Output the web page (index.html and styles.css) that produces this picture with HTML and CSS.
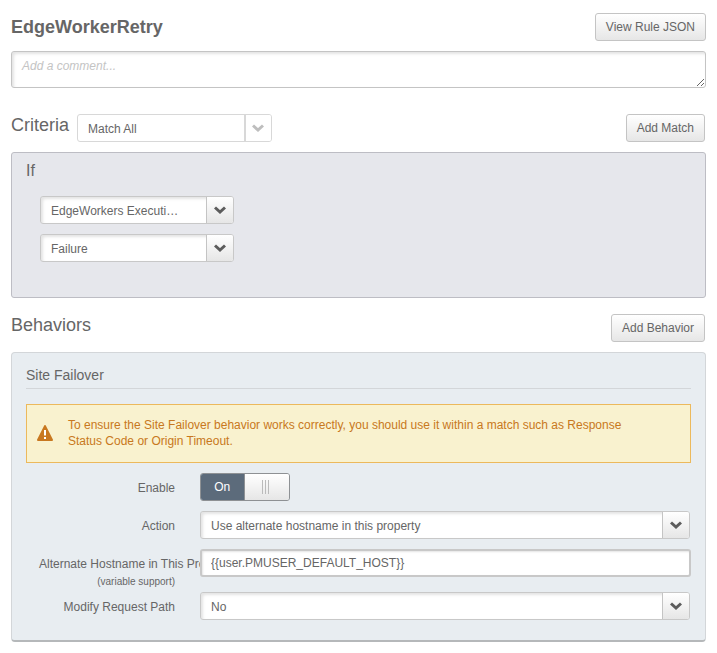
FILE: index.html
```html
<!DOCTYPE html>
<html lang="en">
<head>
<meta charset="utf-8">
<meta name="viewport" content="width=device-width, initial-scale=1">
<title>EdgeWorkerRetry</title>
<link rel="stylesheet" href="styles.css">
</head>
<body>
<main class="rule">
  <header class="bar">
    <h1 class="rule-name">EdgeWorkerRetry</h1>
    <button type="button" class="btn">View Rule JSON</button>
  </header>
  <textarea class="comment" aria-label="Comment" placeholder="Add a comment..."></textarea>

  <section>
    <div class="bar bar-inset">
      <h2 class="heading">Criteria</h2>
      <div class="select select-short select-muted">
        <select aria-label="Match mode"><option>Match All</option></select>
        <svg class="chevron" viewBox="0 0 12 9" aria-hidden="true"><path d="M1 1.5 6 6 11 1.5"/></svg>
      </div>
      <button type="button" class="btn">Add Match</button>
    </div>
    <div class="criteria">
      <h3 class="if">If</h3>
      <div class="conditions">
        <div class="select select-short">
          <select aria-label="Match type"><option>EdgeWorkers Executi…</option></select>
          <svg class="chevron" viewBox="0 0 12 9" aria-hidden="true"><path d="M1 1.5 6 6 11 1.5"/></svg>
        </div>
        <div class="select select-short">
          <select aria-label="Match value"><option>Failure</option></select>
          <svg class="chevron" viewBox="0 0 12 9" aria-hidden="true"><path d="M1 1.5 6 6 11 1.5"/></svg>
        </div>
      </div>
    </div>
  </section>

  <section>
    <div class="bar bar-inset">
      <h2 class="heading">Behaviors</h2>
      <button type="button" class="btn">Add Behavior</button>
    </div>
    <div class="behavior">
      <h3 class="behavior-name">Site Failover</h3>
      <div class="warning" role="alert">
        <svg class="warning-icon" viewBox="0 0 16 16" aria-hidden="true">
          <path class="triangle" d="M7.2.5a1 1 0 0 1 1.6 0L15.900 14.500a1 1 0 0 1-.9 1.500H1a1 1 0 0 1-.9-1.500z"/>
          <path class="mark" d="M7 5h2v5.500H7zM7 12h2v2H7z"/>
        </svg>
        <p>To ensure the Site Failover behavior works correctly, you should use it within a match such as Response Status Code or Origin Timeout.</p>
      </div>
      <div class="fields">
        <div class="field">
          <label class="label" for="enable">Enable</label>
          <div class="toggle">
            <input type="checkbox" id="enable" checked>
            <span class="toggle-on">On</span>
            <span class="toggle-knob"><i></i><i></i><i></i></span>
          </div>
        </div>
        <div class="field">
          <label class="label" for="action">Action</label>
          <div class="select">
            <select id="action"><option>Use alternate hostname in this property</option></select>
            <svg class="chevron" viewBox="0 0 12 9" aria-hidden="true"><path d="M1 1.5 6 6 11 1.5"/></svg>
          </div>
        </div>
        <div class="field">
          <label class="label" for="host">Alternate Hostname in This Property<small>(variable support)</small></label>
          <input class="text" type="text" id="host" value="{{user.PMUSER_DEFAULT_HOST}}">
        </div>
        <div class="field">
          <label class="label" for="path">Modify Request Path</label>
          <div class="select">
            <select id="path"><option>No</option></select>
            <svg class="chevron" viewBox="0 0 12 9" aria-hidden="true"><path d="M1 1.5 6 6 11 1.5"/></svg>
          </div>
        </div>
      </div>
    </div>
  </section>
</main>
</body>
</html>
```
FILE: styles.css
```css
* {
  box-sizing: border-box;
}

body {
  margin: 0;
  background: #fff;
  color: #666;
  font: 12px/16px "Liberation Sans", Arial, sans-serif;
}

h1, h2, h3, p {
  margin: 0;
  font-weight: normal;
}

input, select, textarea, button {
  margin: 0;
  font: inherit;
  color: inherit;
}

.rule {
  padding: 13px 11px 12px;
}

.bar {
  display: flex;
  align-items: center;
  margin-bottom: 10px;
}

.bar-inset {
  margin-top: 16px;
  padding-right: 1px;
}

.comment + section .bar {
  margin-top: 26px;
}

.bar .btn {
  margin-left: auto;
}

.rule-name {
  font-size: 18px;
  line-height: 28px;
  font-weight: bold;
}

.heading {
  font-size: 18px;
  line-height: 22px;
  padding-bottom: 6px;
  margin-right: 8px;
}

.btn {
  height: 28px;
  padding: 0 10px;
  border: 1px solid #c4c4c4;
  border-radius: 3px;
  background: linear-gradient(#fff, #e6e6e6);
}

.comment {
  display: block;
  width: 100%;
  height: 37px;
  padding: 6px 10px;
  border: 1px solid #c4c4c4;
  border-radius: 3px;
  box-shadow: inset 2px 2px 3px #e4e4e4;
  resize: vertical;
  overflow: hidden;
}

.comment::placeholder {
  color: #c4c4c4;
  font-style: italic;
}

.select {
  position: relative;
  display: flex;
  flex: 1;
  height: 28px;
}

.select-short {
  flex: none;
  width: 195px;
}

.conditions .select-short {
  width: 194px;
}

.select select {
  appearance: none;
  width: 100%;
  padding: 2px 34px 0 10px;
  border: 1px solid #c8c8c8;
  border-radius: 3px;
  background: #fff;
  box-shadow: inset 2px 2px 3px #e4e4e4;
}

.select::after {
  content: "";
  position: absolute;
  top: 1px;
  right: 1px;
  bottom: 1px;
  width: 27px;
  border-left: 1px solid #c4c4c4;
  border-radius: 0 2px 2px 0;
  background: linear-gradient(#fff, #e6e6e6);
  pointer-events: none;
  box-sizing: border-box;
}

.chevron {
  position: absolute;
  z-index: 1;
  top: 10px;
  right: 8px;
  width: 12px;
  height: 9px;
  fill: none;
  stroke: #5c5c5c;
  stroke-width: 3;
  pointer-events: none;
}

.select-muted select {
  border-color: #d8d8d8;
  box-shadow: none;
}

.select-muted::after {
  border-left: 2px solid #d8d8d8;
  background: #fff;
}

.select-muted .chevron {
  stroke: #bebebe;
}

.criteria {
  padding: 8px 14px 35px;
  border: 1px solid #bdbdc4;
  border-radius: 3px;
  background: #e6e7ec;
}

.if {
  font-size: 16px;
  line-height: 20px;
}

.conditions {
  display: flex;
  flex-direction: column;
  gap: 10px;
  padding: 15px 14px 0;
}

.behavior {
  padding: 12px 14px 20px;
  border: 1px solid #d3d6d9;
  border-bottom: 2px solid #b5b8ba;
  border-radius: 4px;
  background: #e8edf1;
}

.behavior-name {
  padding-bottom: 3px;
  border-bottom: 1px solid #d3d6d9;
  font-size: 14px;
  line-height: 20px;
}

.warning {
  display: flex;
  align-items: center;
  gap: 15px;
  margin: 15px 0 10px;
  padding: 12px 60px 13px 10px;
  border: 1px solid #ecb95c;
  background: #f9f2cf;
  color: #c87820;
}

.warning-icon {
  flex: none;
  width: 16px;
  height: 16px;
}

.triangle {
  fill: #c87820;
}

.mark {
  fill: #fff;
}

.fields {
  display: flex;
  flex-direction: column;
  gap: 10px;
  padding: 0 1px 0 13px;
}

.field {
  display: flex;
  align-items: flex-start;
}

.label {
  flex: none;
  width: 136px;
  margin-right: 25px;
  padding-top: 7px;
  text-align: right;
  white-space: nowrap;
}

.label small {
  display: block;
  margin-bottom: -5px;
  padding-top: 5px;
  font-size: 10px;
  line-height: 10px;
}

.text {
  position: relative;
  flex: 1;
  min-width: 0;
  height: 28px;
  margin-right: -1px;
  padding: 0 9px;
  border: 2px solid #c8c8c8;
  border-radius: 3px;
  background: #fff;
  box-shadow: inset 1px 1px 2px #e4e4e4;
}

.toggle {
  position: relative;
  display: flex;
  width: 90px;
  height: 28px;
  border: 1px solid #8e9194;
  border-radius: 3px;
  overflow: hidden;
}

.toggle input {
  position: absolute;
  inset: 0;
  width: 100%;
  height: 100%;
  opacity: 0;
}

.toggle-on {
  flex: 1;
  background: #5c6b7b;
  color: #fff;
  line-height: 26px;
  text-align: center;
}

.toggle-knob {
  display: flex;
  flex: 1;
  align-items: center;
  justify-content: center;
  gap: 2px;
  padding-right: 2px;
  border-left: 1px solid #8e9194;
  background: linear-gradient(#fff, #e6e6e6);
}

.toggle-knob i {
  width: 1px;
  height: 14px;
  background: #bbb;
}
```
